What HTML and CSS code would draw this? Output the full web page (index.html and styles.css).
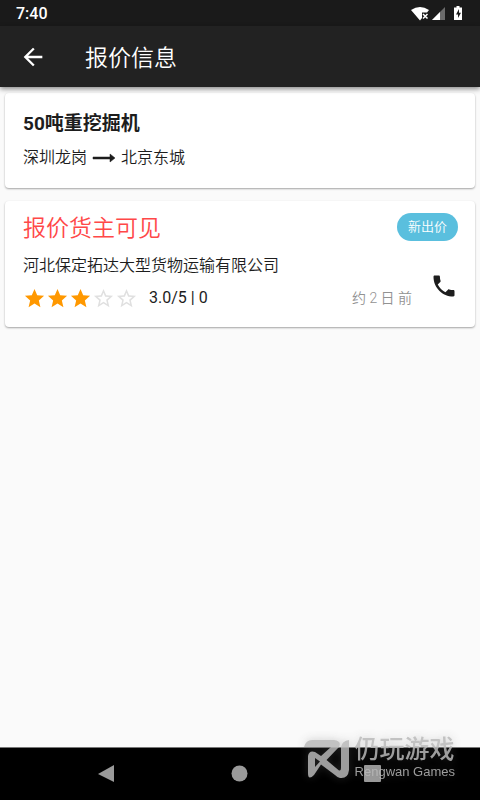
FILE: index.html
```html
<!DOCTYPE html>
<html lang="zh-CN">
<head>
<meta charset="utf-8">
<meta name="viewport" content="width=device-width, initial-scale=1">
<title>报价信息</title>
<link rel="stylesheet" href="styles.css">
</head>
<body>
<div class="screen">
  <div class="status-bar">
    <span class="clock">7:40</span>
    <svg class="status-icons" width="54" height="16" viewBox="0 0 54 16" aria-hidden="true">
      <path d="M1 4Q10-2 19 4L17 6.500H12V12L10 14.500Z" fill="#fff"/>
      <path d="M13 8L17.500 12.500M17.500 8L13 12.500" stroke="#fff" stroke-width="1.500"/>
      <path d="M35 1V14H22Z" fill="#6b6b6b"/>
      <path d="M30 6V14H22Z" fill="#fff"/>
      <path d="M46.500 0H49.500V1.500H52V14H44V1.500H46.500Z" fill="#fff"/>
      <path d="M49 3L46 8.500H48V12L51 6.800H49Z" fill="#1a1a1a"/>
    </svg>
  </div>
  <header class="app-bar">
    <button class="icon-button" type="button" aria-label="返回">
      <svg width="28" height="28" viewBox="0 0 24 24"><path d="M20 11H7.830l5.590-5.590L12 4l-8 8 8 8 1.410-1.410L7.830 13H20z" fill="currentColor"/></svg>
    </button>
    <h1 class="app-title">报价信息</h1>
  </header>
  <main class="content">
    <section class="card">
      <h2 class="cargo">50吨重挖掘机</h2>
      <p class="route">
        <span>深圳龙岗</span>
        <svg width="24" height="12" viewBox="0 0 24 12" aria-label="至"><path d="M1 5H18V2L23 6L18 10V7H1Z" fill="currentColor" stroke="currentColor" stroke-width=".5"/></svg>
        <span>北京东城</span>
      </p>
    </section>
    <section class="card quote">
      <div class="quote-head">
        <h2 class="price">报价货主可见</h2>
        <span class="badge">新出价</span>
      </div>
      <div class="quote-body">
        <div class="details">
          <p class="company">河北保定拓达大型货物运输有限公司</p>
          <div class="meta">
            <span class="stars" role="img" aria-label="3.0/5">
              <svg class="star" viewBox="0 0 24 24"><use href="#star-full"/></svg>
              <svg class="star" viewBox="0 0 24 24"><use href="#star-full"/></svg>
              <svg class="star" viewBox="0 0 24 24"><use href="#star-full"/></svg>
              <svg class="star empty" viewBox="0 0 24 24"><use href="#star-line"/></svg>
              <svg class="star empty" viewBox="0 0 24 24"><use href="#star-line"/></svg>
            </span>
            <span class="rating">3.0/5 | 0</span>
            <span class="time">约 2 日 前</span>
          </div>
        </div>
        <button class="icon-button call" type="button" aria-label="拨打电话">
          <svg width="28" height="28" viewBox="0 0 24 24"><path d="M6.620 10.790c1.440 2.830 3.760 5.140 6.590 6.590l2.200-2.200c.27-.27.67-.36 1.020-.24 1.120.37 2.330.57 3.570.57.55 0 1 .45 1 1V20c0 .55-.45 1-1 1-9.390 0-17-7.610-17-17 0-.55.45-1 1-1h3.500c.55 0 1 .45 1 1 0 1.250.2 2.450.57 3.570.11.35.03.74-.25 1.020l-2.200 2.200z" fill="currentColor"/></svg>
        </button>
      </div>
    </section>
  </main>
  <nav class="nav-bar">
    <button type="button" aria-label="后退"><svg width="20" height="20" viewBox="0 0 20 20"><path d="M1 10L17 1V18Z" fill="#9a9a9a"/></svg></button>
    <button type="button" aria-label="主屏幕"><svg width="20" height="20" viewBox="0 0 20 20"><circle cx="9.500" cy="9.500" r="8" fill="#9a9a9a"/></svg></button>
    <button type="button" aria-label="最近任务"><svg width="20" height="20" viewBox="0 0 20 20"><rect x="1" y="1" width="17" height="17" rx="1" fill="#9a9a9a"/></svg></button>
  </nav>
  <div class="watermark">
    <svg width="46" height="40" viewBox="0 0 46 40" aria-hidden="true">
      <path d="M0 8Q2 1 8 1H30Q38 2 35 8L22.500 21L35 31.500Q37 32 37 29V8Q38 2 45 1V31Q44 40 36 39Q34 39 31 36L17 25.500L10 36Q4 42 4 34V17Q5 11 11 13L17 17L27 8ZM11 19V28L16 22.500Z" fill="currentColor" fill-rule="evenodd"/>
    </svg>
    <div class="wm-text">
      <span class="wm-name">仍玩游戏</span>
      <span class="wm-sub">Rengwan Games</span>
    </div>
  </div>
</div>
<svg class="symbols" width="0" height="0" aria-hidden="true">
  <symbol id="star-full" viewBox="0 0 24 24"><path d="M12 17.270L18.180 21l-1.640-7.030L22 9.240l-7.190-.61L12 2 9.190 8.630 2 9.240l5.460 4.730L5.820 21z" fill="currentColor"/></symbol>
  <symbol id="star-line" viewBox="0 0 24 24"><path d="M22 9.240l-7.190-.62L12 2 9.190 8.630 2 9.240l5.460 4.730L5.820 21 12 17.270 18.180 21l-1.630-7.030L22 9.240zM12 15.400l-3.760 2.270 1-4.280-3.320-2.880 4.380-.38L12 6.100l1.710 4.040 4.380.38-3.320 2.880 1 4.280L12 15.400z" fill="currentColor"/></symbol>
</svg>
</body>
</html>
```
FILE: styles.css
```css
* { box-sizing: border-box; }
body {
  margin: 0;
  background: #fafafa;
  color: #1d1d1d;
  font-family: Roboto, "Noto Sans CJK SC", sans-serif;
  font-size: 16px;
}
h1, h2, p { margin: 0; font-weight: 350; }
svg { display: block; }
button {
  border: 0;
  padding: 0;
  background: none;
  color: inherit;
  display: flex;
  align-items: center;
  justify-content: center;
}
.screen {
  position: relative;
  min-height: 100vh;
  display: flex;
  flex-direction: column;
}
.status-bar {
  display: flex;
  align-items: center;
  justify-content: space-between;
  height: 26px;
  padding: 2px 16px 0;
  background: #1a1a1a;
  color: #fff;
}
.clock { font-weight: 500; line-height: 24px; }
.app-bar {
  display: flex;
  align-items: center;
  gap: 38px;
  height: 61px;
  padding: 0 19px;
  background: #222;
  color: #fff;
  box-shadow: 0 2px 5px rgba(0, 0, 0, 0.45);
  z-index: 1;
}
.icon-button { flex: none; }
.app-title { padding-top: 4px; font-size: 23px; line-height: 32px; }
.content {
  flex: 1;
  display: flex;
  flex-direction: column;
  gap: 13px;
  padding: 6px 5px;
}
.card {
  padding: 18px;
  background: #fff;
  border-radius: 4px;
  box-shadow: 0 1px 2px rgba(0, 0, 0, 0.35);
}
.cargo { font-size: 19px; font-weight: 700; line-height: 26px; }
.route {
  display: flex;
  align-items: center;
  gap: 5px;
  margin-top: 9px;
  line-height: 24px;
}
.quote { padding: 12px 17px 17px 18px; }
.quote-head { display: flex; align-items: flex-start; justify-content: space-between; }
.price { color: #ff4848; font-size: 23px; line-height: 32px; }
.badge {
  padding: 0 11px;
  border-radius: 14px;
  background: #5abfde;
  color: #fff;
  font-size: 13px;
  font-weight: 350;
  line-height: 28px;
}
.quote-body { display: flex; align-items: flex-end; gap: 18px; }
.details { flex: 1; }
.company { margin-top: 9px; line-height: 24px; }
.meta { display: flex; align-items: center; margin-top: 8px; line-height: 24px; }
.stars { display: flex; color: #ff9800; }
.star { width: 23px; height: 23px; }
.empty { color: #e0e0e0; }
.rating { margin-left: 11px; }
.time { margin-left: auto; color: #929292; font-size: 14px; font-weight: 350; }
.call { margin-bottom: 10px; }
.nav-bar {
  display: flex;
  align-items: center;
  justify-content: center;
  gap: 113px;
  height: 53px;
  border-top: 1px solid #777;
  background: #000;
}
.watermark {
  position: absolute;
  right: 25px;
  bottom: 19px;
  display: flex;
  align-items: center;
  gap: 5px;
  color: rgb(185, 185, 185);
  opacity: 0.85;
  filter: drop-shadow(0 0 5px rgba(110, 110, 110, 0.4));
}
.wm-text { display: flex; flex-direction: column; }
.wm-name { font-size: 25px; font-weight: 500; line-height: 26px; }
.wm-sub { font-family: "Liberation Sans", Arial, sans-serif; font-size: 13px; line-height: 18px; }
.symbols { position: absolute; }
```
